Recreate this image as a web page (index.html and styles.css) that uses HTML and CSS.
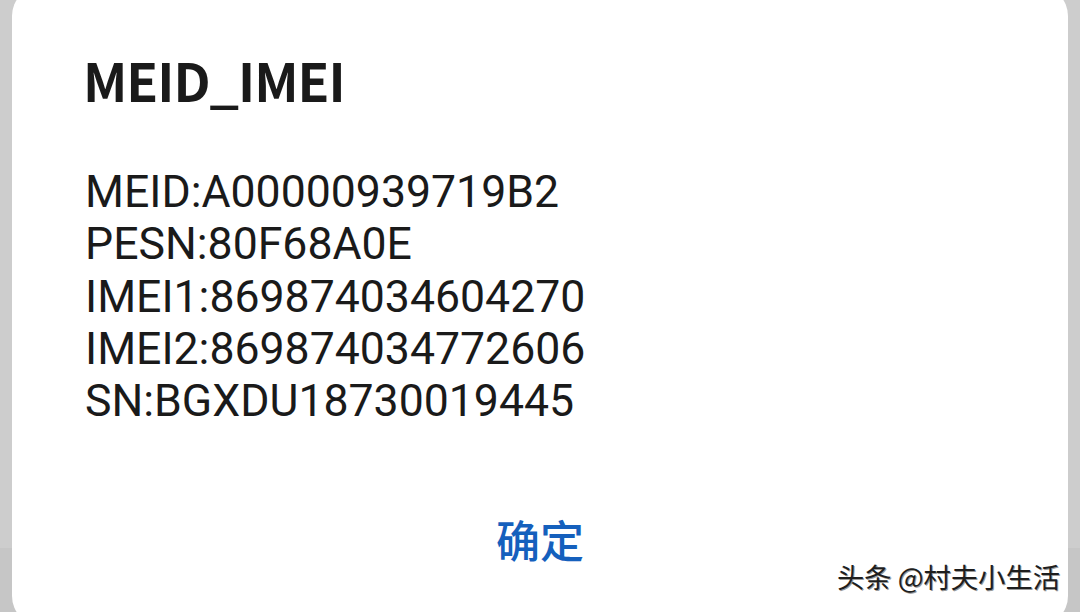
FILE: index.html
```html
<!DOCTYPE html>
<html lang="zh">
<head>
<meta charset="utf-8">
<link rel="stylesheet" href="styles.css">
</head>
<body>
<div class="screen">
  <div class="dialog">
    <h1 class="title">MEID_IMEI</h1>
    <div class="info">
      <div class="line">MEID:A00000939719B2</div>
      <div class="line">PESN:80F68A0E</div>
      <div class="line">IMEI1:869874034604270</div>
      <div class="line">IMEI2:869874034772606</div>
      <div class="line">SN:BGXDU18730019445</div>
    </div>
    <div class="actions">
      <span class="ok">确定</span>
    </div>
  </div>
  <div class="watermark">头条 @村夫小生活</div>
</div>
</body>
</html>
```

FILE: styles.css
```css
html, body {
  margin: 0;
  padding: 0;
}
body {
  width: 1080px;
  height: 612px;
  overflow: hidden;
  background: linear-gradient(#cdcdcd 0, #cdcdcd 548px, #c6c6c6 548px);
}
.screen {
  position: relative;
  width: 1080px;
  height: 612px;
  overflow: hidden;
}
.dialog {
  margin: -14px 12px 0 12px;
  height: 640px;
  background: #ffffff;
  border-radius: 30px;
  padding: 0 0 0 71px;
  box-sizing: border-box;
  display: flex;
  flex-direction: column;
}
.title {
  margin: 66px 0 0 0;
  font-family: "Noto Sans CJK SC", "Noto Sans", sans-serif;
  font-weight: 700;
  font-size: 52px;
  line-height: 56px;
  color: #1a1a1a;
  letter-spacing: -1px;
}
.info {
  margin: 58px 0 0 2px;
  font-family: Roboto, "Noto Sans CJK SC", sans-serif;
  font-size: 44.6px;
  line-height: 52.3px;
  color: #1a1a1a;
}
.actions {
  margin-top: 84px;
  margin-left: -71px;
  display: flex;
  justify-content: center;
}
.ok {
  font-family: "Noto Sans CJK SC", sans-serif;
  font-weight: 500;
  font-size: 44px;
  line-height: 56px;
  color: #1560bd;
}
.watermark {
  position: absolute;
  right: 20px;
  top: 557px;
  font-family: "Noto Sans CJK SC", sans-serif;
  font-size: 27.3px;
  line-height: 38px;
  color: #1e1e1e;
  text-shadow: 1px 1px 0 #9a9a9a;
}
```
